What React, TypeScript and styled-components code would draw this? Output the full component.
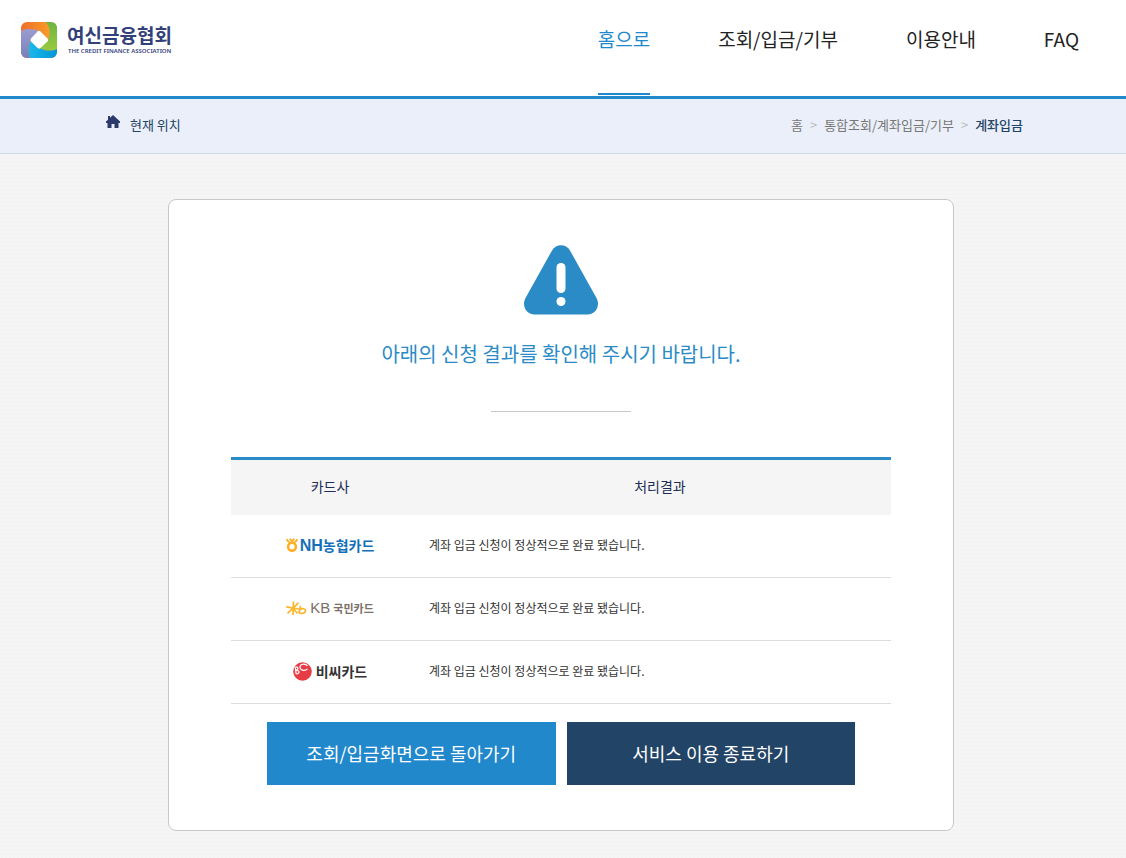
import React from "react";
import styled, { createGlobalStyle } from "styled-components";

const GlobalStyle = createGlobalStyle`
  *, *::before, *::after { box-sizing: border-box; }
  html, body { margin: 0; }
  body {
    min-height: 100vh;
    background: #f5f5f5 radial-gradient(circle, #f3f3f3 1px, transparent 1px) 0 0 / 4px 4px;
    color: #333;
    font-family: "Noto Sans CJK KR", "Noto Sans", sans-serif;
    font-size: 13px;
    line-height: 20px;
  }
`;

const Header = styled.header`
  display: flex;
  justify-content: space-between;
  min-height: 99px;
  padding: 0 47px 0 21px;
  background: #fff;
  border-bottom: 3px solid #2288cc;
`;

const Brand = styled.a`
  display: flex;
  align-items: flex-start;
  gap: 10px;
  padding-top: 22px;
  color: #33417a;
  text-decoration: none;
`;

const BrandText = styled.span`
  display: flex;
  flex-direction: column;
`;

const BrandName = styled.strong`
  font-size: 19px;
  line-height: 25px;
`;

const BrandCaption = styled.span`
  padding-left: 1px;
  font-family: "Noto Sans", sans-serif;
  font-size: 6px;
  font-weight: 600;
  line-height: 8px;
  white-space: nowrap;
`;

const Nav = styled.nav`
  display: flex;
  gap: 68px;
  height: 95px;
`;

const NavLink = styled.a<{ $active?: boolean }>`
  padding-top: 24px;
  border-bottom: 2px solid ${(p) => (p.$active ? "#2288cc" : "transparent")};
  color: ${(p) => (p.$active ? "#2288cc" : "#222")};
  font-size: 19px;
  line-height: 30px;
  text-decoration: none;
  white-space: nowrap;
`;

const Location = styled.div`
  display: flex;
  justify-content: space-between;
  align-items: center;
  min-height: 55px;
  padding: 0 103px 2px 106px;
  background: #ebeff9;
  border-bottom: 1px solid #cfdde2;
`;

const Here = styled.span`
  display: flex;
  align-items: flex-start;
  gap: 9px;
  color: #224466;
`;

const Crumbs = styled.ol`
  display: flex;
  margin: 0;
  padding: 0;
  list-style: none;
`;

const Crumb = styled.li`
  color: #777;

  & + &::before {
    content: ">";
    padding: 0 7px;
    color: #bbb;
    font-weight: 400;
  }

  a {
    color: inherit;
    text-decoration: none;
  }

  &[aria-current] {
    color: #224466;
    font-weight: 500;
  }
`;

const Main = styled.main`
  padding: 45px 4px 27px 0;
`;

const Card = styled.section`
  display: flex;
  flex-direction: column;
  align-items: center;
  max-width: 786px;
  margin: 0 auto;
  padding: 45px 62px;
  background: #fff;
  border: 1px solid #c8c8c8;
  border-radius: 8px;
`;

const Message = styled.h1`
  margin: 24px 0 0;
  color: #2a8bc6;
  font-size: 20px;
  font-weight: 400;
  line-height: 30px;
`;

const Divider = styled.hr`
  width: 140px;
  margin: 42px 0 45px;
  border: 0;
  border-top: 1px solid #c8c8c8;
`;

const Table = styled.table`
  width: 100%;
  border-collapse: separate;
  border-spacing: 0;
  border-top: 3px solid #2a8bc6;
`;

const HeadCell = styled.th`
  height: 55px;
  padding: 0 0 4px;
  background: #f5f5f5;
  color: #222c55;
  font-size: 14px;
  font-weight: 400;

  &:first-child { width: 30%; }
`;

const Cell = styled.td`
  height: 63px;
  padding: 0 0 2px;
  border-bottom: 1px solid #ddd;
  font-size: 12px;
`;

const CardLogo = styled.span<{ $color: string; $gap: number }>`
  display: flex;
  align-items: center;
  justify-content: center;
  gap: ${(p) => p.$gap}px;
  color: ${(p) => p.$color};
`;

const LogoLatin = styled.span<{ $bold?: boolean }>`
  font-family: "Liberation Sans", sans-serif;
  font-size: ${(p) => (p.$bold ? 16 : 15)}px;
  font-weight: ${(p) => (p.$bold ? 700 : 400)};
`;

const LogoHangul = styled.span<{ $size: number }>`
  font-size: ${(p) => p.$size}px;
  font-weight: 700;
`;

const Actions = styled.div`
  display: flex;
  gap: 11px;
  width: 100%;
  margin-top: 18px;
  padding: 0 36px;
`;

const ActionButton = styled.button<{ $dark?: boolean }>`
  flex: 1;
  height: 63px;
  padding: 0 0 2px;
  border: 0;
  background: ${(p) => (p.$dark ? "#224466" : "#2288cc")};
  color: #fff;
  font-family: inherit;
  font-size: 18px;
  cursor: pointer;
`;

const AssociationMark = () => (
  <svg width="36" height="36" viewBox="0 0 36 36" aria-hidden="true">
    <defs>
      <clipPath id="mark"><rect width="36" height="36" rx="6" /></clipPath>
      <linearGradient id="orange"><stop stopColor="#ef6f2b" /><stop offset="1" stopColor="#f9a72b" /></linearGradient>
      <linearGradient id="green" x2="0" y2="1"><stop stopColor="#6cb545" /><stop offset="1" stopColor="#9ac93f" /></linearGradient>
      <linearGradient id="blue"><stop stopColor="#1cb9ea" /><stop offset="1" stopColor="#0095d9" /></linearGradient>
      <linearGradient id="violet" x2="0" y2="1"><stop stopColor="#9c9ccd" /><stop offset="1" stopColor="#7880ba" /></linearGradient>
    </defs>
    <g clipPath="url(#mark)">
      <rect width="36" height="36" fill="url(#orange)" />
      <path d="M25 0C29 5 30 12 27 18L18 26C24 29.500 31 29 36 27V0Z" fill="url(#green)" />
      <path d="M36 27C31 29.500 24 29 18 26L10 18C7 24 7 30 9 36H36Z" fill="url(#blue)" />
      <path d="M0 9C6 6 13 7 18 9L18 18L10 18C7 24 7 30 9 36H0Z" fill="url(#violet)" />
      <path d="M16.500 9.500Q18 8.200 19.500 9.500L26.500 16.500Q27.800 18 26.500 19.500L19.500 26Q18 27.200 16.500 26L10 19.500Q8.800 18 10 16.500Z" fill="#fff" />
    </g>
  </svg>
);

const HomeIcon = () => (
  <svg width="15" height="14" viewBox="0 0 15 14" aria-hidden="true">
    <path d="M7 0L14 6.500V8H12.500V13H8.500V9H5.500V13H1.500V8H0V6.500L2 4.700V1H4V2.800Z" fill="#2b3a6b" />
  </svg>
);

const WarningIcon = () => (
  <svg width="74" height="70" viewBox="0 0 74 70" role="img" aria-label="알림">
    <path d="M28 5.500C32-1.500 42-1.500 46 5.500L72.500 53C76.500 60.500 72 69.500 63.500 69.500H10.500C2 69.500-2.500 60.500 1.500 53Z" fill="#2a8bc6" />
    <rect x="32.500" y="18" width="9" height="30" rx="4.500" fill="#fff" />
    <circle cx="37" cy="56.500" r="4.500" fill="#fff" />
  </svg>
);

const NhMark = () => (
  <svg width="12" height="14" viewBox="0 0 12 14" aria-hidden="true">
    <circle cx="6" cy="8.700" r="3.900" fill="none" stroke="#fbb026" strokeWidth="2.600" />
    <path d="M.6 1.200Q1.500 3.500 4 4.500M11.400 1.200Q10.500 3.500 8 4.500M3.600 .8L6 3.200L8.400 .8" fill="none" stroke="#fbb026" strokeWidth="1.800" />
  </svg>
);

const KbMark = () => (
  <svg width="21" height="15" viewBox="0 0 21 15" aria-hidden="true">
    <path d="M7.500 .5L7 14M.3 5.800L12.800 8M12.500 1.800L1.500 12.300M7.500 8L11.500 12.300M14.500 5L13 12" fill="none" stroke="#fbb52b" strokeWidth="1.700" />
    <path d="M13.500 8.800C16 6.800 20 7.500 19.500 10C19 12.500 15 13 13 11.800" fill="none" stroke="#fbb52b" strokeWidth="1.700" />
  </svg>
);

const BcMark = () => (
  <svg width="19" height="19" viewBox="0 0 19 19" aria-hidden="true">
    <circle cx="9.500" cy="9.500" r="9.300" fill="#e63c46" />
    <path d="M2.200 5L3.200 12.200M2 5.500C4.500 4 6.500 6.500 3 8.500C7 8 7 11.500 3.500 12M14.500 3.800C12 .8 6.500 2 7 5.500C7.500 9 12.500 9.200 14.500 6.800" fill="none" stroke="#fff" strokeWidth="1.200" />
  </svg>
);

const navItems = ["홈으로", "조회/입금/기부", "이용안내", "FAQ"];

const results = [
  {
    id: "nh",
    logo: (
      <CardLogo $color="#1470b8" $gap={2}>
        <NhMark />
        <span><LogoLatin $bold>NH</LogoLatin><LogoHangul $size={14}>농협카드</LogoHangul></span>
      </CardLogo>
    ),
  },
  {
    id: "kb",
    logo: (
      <CardLogo $color="#7d7068" $gap={3}>
        <KbMark />
        <LogoLatin>KB</LogoLatin>
        <LogoHangul $size={11}>국민카드</LogoHangul>
      </CardLogo>
    ),
  },
  {
    id: "bc",
    logo: (
      <CardLogo $color="#333" $gap={4}>
        <BcMark />
        <LogoHangul $size={14}>비씨카드</LogoHangul>
      </CardLogo>
    ),
  },
];

export default function App() {
  return (
    <>
      <GlobalStyle />
      <Header>
        <Brand href="#">
          <AssociationMark />
          <BrandText>
            <BrandName>여신금융협회</BrandName>
            <BrandCaption>THE CREDIT FINANCE ASSOCIATION</BrandCaption>
          </BrandText>
        </Brand>
        <Nav>
          {navItems.map((label, i) => (
            <NavLink key={label} href="#" $active={i === 0}>{label}</NavLink>
          ))}
        </Nav>
      </Header>
      <Location>
        <Here><HomeIcon />현재 위치</Here>
        <Crumbs>
          <Crumb><a href="#">홈</a></Crumb>
          <Crumb><a href="#">통합조회/계좌입금/기부</a></Crumb>
          <Crumb aria-current="page">계좌입금</Crumb>
        </Crumbs>
      </Location>
      <Main>
        <Card>
          <WarningIcon />
          <Message>아래의 신청 결과를 확인해 주시기 바랍니다.</Message>
          <Divider />
          <Table>
            <thead>
              <tr>
                <HeadCell scope="col">카드사</HeadCell>
                <HeadCell scope="col">처리결과</HeadCell>
              </tr>
            </thead>
            <tbody>
              {results.map((r) => (
                <tr key={r.id}>
                  <Cell>{r.logo}</Cell>
                  <Cell>계좌 입금 신청이 정상적으로 완료 됐습니다.</Cell>
                </tr>
              ))}
            </tbody>
          </Table>
          <Actions>
            <ActionButton type="button">조회/입금화면으로 돌아가기</ActionButton>
            <ActionButton type="button" $dark>서비스 이용 종료하기</ActionButton>
          </Actions>
        </Card>
      </Main>
    </>
  );
}
